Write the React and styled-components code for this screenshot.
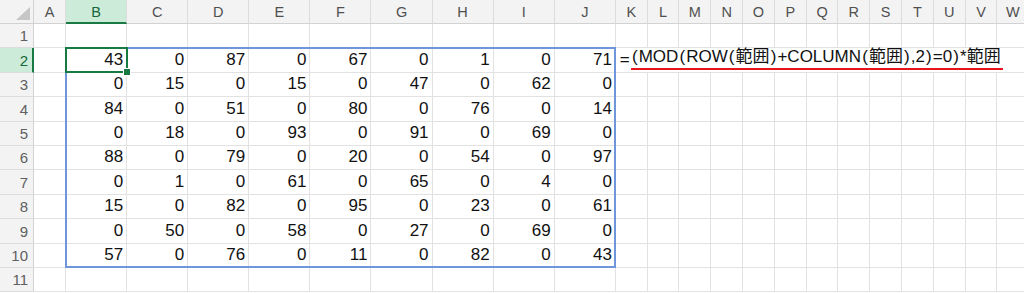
import React from "react";
import styled, { createGlobalStyle } from "styled-components";

const Global = createGlobalStyle`
  html, body { margin: 0; padding: 0; background: #fff; }
  body { font-family: "Liberation Sans", Arial, sans-serif; }
`;

const COLS = "ABCDEFGHIJKLMNOPQRSTUVW".split("");
const DATA = [
  [43, 0, 87, 0, 67, 0, 1, 0, 71],
  [0, 15, 0, 15, 0, 47, 0, 62, 0],
  [84, 0, 51, 0, 80, 0, 76, 0, 14],
  [0, 18, 0, 93, 0, 91, 0, 69, 0],
  [88, 0, 79, 0, 20, 0, 54, 0, 97],
  [0, 1, 0, 61, 0, 65, 0, 4, 0],
  [15, 0, 82, 0, 95, 0, 23, 0, 61],
  [0, 50, 0, 58, 0, 27, 0, 69, 0],
  [57, 0, 76, 0, 11, 0, 82, 0, 43],
];

const FORMULA = "(MOD(ROW(範囲)+COLUMN(範囲),2)=0)*範囲";

const Viewport = styled.div`
  width: 1024px;
  height: 293px;
  overflow: hidden;
  background: #fff;
`;

const Sheet = styled.div`
  display: grid;
  grid-template-columns: 34px 32px repeat(9, 61.1px) repeat(13, 31.8px);
  grid-template-rows: 24px repeat(11, 24.4px);
  width: max-content;
`;

const Corner = styled.div`
  grid-row: 1;
  grid-column: 1;
  position: relative;
  background: #f3f3f3;
  border-right: 1px solid #d2d2d2;
  border-bottom: 1px solid #d2d2d2;
  box-sizing: border-box;
  &::after {
    content: "";
    position: absolute;
    right: 3px;
    bottom: 3px;
    width: 14px;
    height: 13px;
    background: #c6c6c6;
    clip-path: polygon(100% 0, 100% 100%, 0 100%);
  }
`;

const ColHeader = styled.div`
  grid-row: 1;
  grid-column: ${(p) => p.$c};
  box-sizing: border-box;
  background: ${(p) => (p.$selected ? "#cdebd9" : "#f3f3f3")};
  border-right: 1px solid #dcdcdc;
  border-bottom: ${(p) => (p.$selected ? "2px solid #1a7a44" : "1px solid #d2d2d2")};
  color: ${(p) => (p.$selected ? "#15683a" : "#505050")};
  font-size: 14.5px;
  display: flex;
  align-items: center;
  justify-content: center;
  padding-top: ${(p) => (p.$selected ? "1px" : "0")};
`;

const RowHeader = styled.div`
  grid-row: ${(p) => p.$r};
  grid-column: 1;
  box-sizing: border-box;
  background: ${(p) => (p.$selected ? "#cdebd9" : "#f3f3f3")};
  border-right: ${(p) => (p.$selected ? "2px solid #1a7a44" : "1px solid #d2d2d2")};
  border-bottom: 1px solid #dcdcdc;
  color: ${(p) => (p.$selected ? "#15683a" : "#606060")};
  font-size: 15px;
  display: flex;
  align-items: flex-end;
  justify-content: flex-end;
  padding: 0 ${(p) => (p.$selected ? "4px" : "5px")} 3px 0;
`;

const Cell = styled.div`
  grid-row: ${(p) => p.$r};
  grid-column: ${(p) => p.$c};
  box-sizing: border-box;
  background: #fff;
  border-right: 1px solid #e2e2e2;
  border-bottom: 1px solid #e2e2e2;
  color: #111;
  font-size: 17px;
  display: flex;
  align-items: flex-end;
  justify-content: flex-end;
  padding: 0 3px 2px 0;
  white-space: nowrap;
`;

const TextCell = styled(Cell)`
  grid-column: ${(p) => p.$c} / span ${(p) => p.$span};
  justify-content: flex-start;
  font-family: "Liberation Sans", "Noto Sans CJK JP", sans-serif;
  font-size: 17px;
  padding: 0 0 2px 4px;
  border-right: none;
`;

const Marked = styled.span`
  border-bottom: 2px solid #e8141b;
  padding: 0 2px 1px 0;
  margin-left: 1px;
`;

const Paren = styled.span`
  margin: 0 1.1px;
`;

const RangeBox = styled.div`
  grid-row: 3 / 12;
  grid-column: 3 / 12;
  z-index: 2;
  margin: -1px 0 0 -1px;
  border: 2px solid #6f96da;
  pointer-events: none;
`;

const ActiveBox = styled.div`
  grid-row: 3;
  grid-column: 3;
  z-index: 3;
  position: relative;
  margin: -1px -1px 0 -1px;
  border: 2px solid #177a43;
  pointer-events: none;
`;

const FillHandle = styled.span`
  position: absolute;
  right: -5px;
  bottom: -5px;
  width: 6px;
  height: 6px;
  background: #177a43;
  border: 1px solid #fff;
`;

function renderFormula(text) {
  return text.split(/([()])/).map((part, i) =>
    part === "(" || part === ")" ? <Paren key={i}>{part}</Paren> : part
  );
}

export default function App() {
  const rows = [];
  for (let r = 1; r <= 11; r++) {
    const gr = r + 1;
    rows.push(
      <RowHeader key={`rh${r}`} $r={gr} $selected={r === 2}>
        {r}
      </RowHeader>
    );
    COLS.forEach((col, ci) => {
      const gc = ci + 2;
      if (r === 2 && ci >= 10) {
        if (ci === 10) {
          rows.push(
            <TextCell key={`c${r}${col}`} $r={gr} $c={gc} $span={13}>
              =<Marked>{renderFormula(FORMULA)}</Marked>
            </TextCell>
          );
        }
        return;
      }
      const val =
        r >= 2 && r <= 10 && ci >= 1 && ci <= 9 ? DATA[r - 2][ci - 1] : "";
      rows.push(
        <Cell key={`c${r}${col}`} $r={gr} $c={gc}>
          {val}
        </Cell>
      );
    });
  }

  return (
    <Viewport>
      <Global />
      <Sheet>
        <Corner />
        {COLS.map((c, i) => (
          <ColHeader key={c} $c={i + 2} $selected={c === "B"}>
            {c}
          </ColHeader>
        ))}
        {rows}
        <RangeBox />
        <ActiveBox>
          <FillHandle />
        </ActiveBox>
      </Sheet>
    </Viewport>
  );
}
